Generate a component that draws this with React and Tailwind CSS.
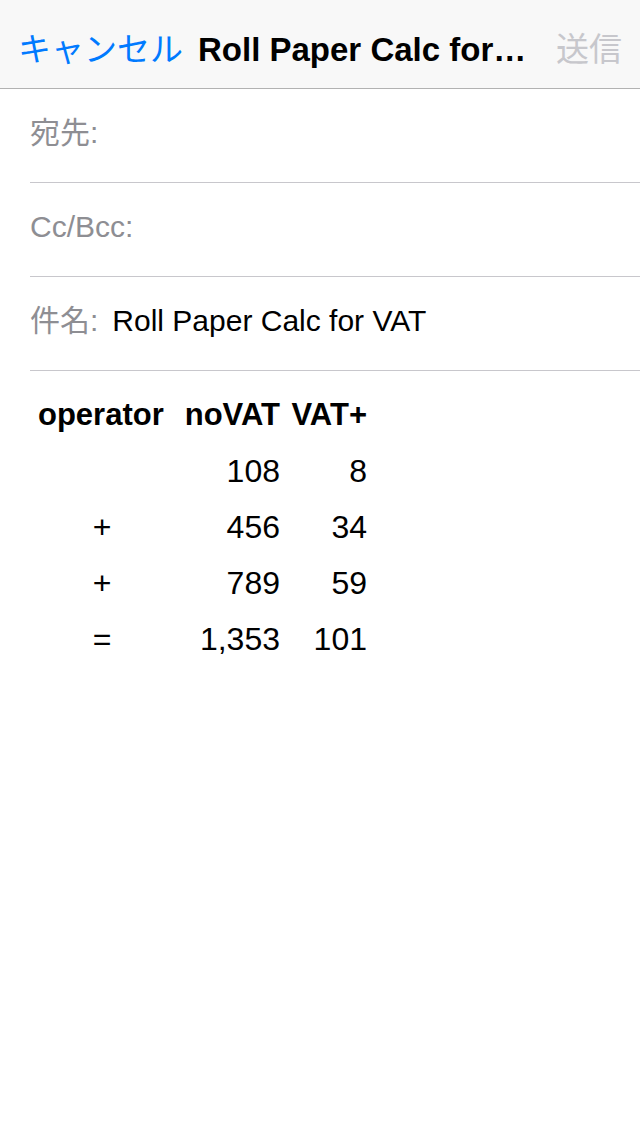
const rows = [
  { op: "", noVat: "108", vat: "8" },
  { op: "+", noVat: "456", vat: "34" },
  { op: "+", noVat: "789", vat: "59" },
  { op: "=", noVat: "1,353", vat: "101" },
];

const FONT = { fontFamily: '"Liberation Sans", "Noto Sans CJK JP", sans-serif' };

function FieldRow({ label, children }) {
  return (
    <div className="ml-[30px] h-[94px] border-b border-[#c8c7cc] flex items-center pb-[6px]">
      <span className="text-[30px] text-[#8e8e93]">{label}</span>
      {children}
    </div>
  );
}

export default function App() {
  return (
    <div className="w-[640px] h-[1136px] bg-white overflow-hidden" style={FONT}>
      {/* nav bar */}
      <div className="h-[89px] bg-[#f8f8f8] border-b border-[#b2b2b2] flex items-center justify-between pl-[18px] pr-[18px] pt-[10px]">
        <span className="text-[33px] text-[#007aff] leading-none">キャンセル</span>
        <span className="text-[33px] font-bold text-black leading-none ml-[15px] flex-1 whitespace-nowrap">
          Roll Paper Calc for…
        </span>
        <span className="text-[33px] text-[#c7c7cc] leading-none">送信</span>
      </div>

      <FieldRow label="宛先:" />
      <FieldRow label="Cc/Bcc:" />
      <FieldRow label="件名:">
        <span className="text-[30px] text-black ml-[14px]">Roll Paper Calc for VAT</span>
      </FieldRow>

      {/* body */}
      <div className="pl-[38px] pt-[16px]">
        <div className="grid grid-cols-[128px_114px_87px] text-black">
          <div className="h-[56px] leading-[56px] text-[31px] font-bold text-left">operator</div>
          <div className="h-[56px] leading-[56px] text-[31px] font-bold text-right">noVAT</div>
          <div className="h-[56px] leading-[56px] text-[31px] font-bold text-right">VAT+</div>
          {rows.map((r, i) => (
            <div key={i} className="contents">
              <div className="h-[56px] leading-[56px] text-[32px] text-center">{r.op}</div>
              <div className="h-[56px] leading-[56px] text-[32px] text-right">{r.noVat}</div>
              <div className="h-[56px] leading-[56px] text-[32px] text-right">{r.vat}</div>
            </div>
          ))}
        </div>
      </div>
    </div>
  );
}
